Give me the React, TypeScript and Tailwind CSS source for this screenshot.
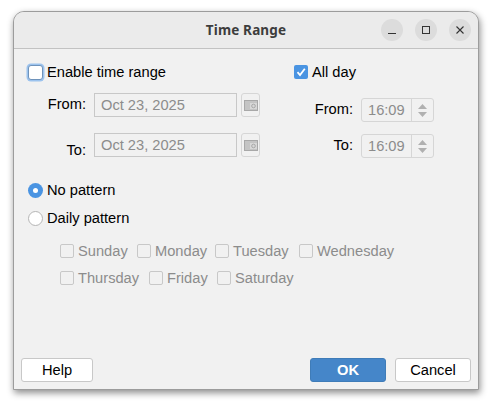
import React from 'react'

const Calendar = () => (
  <div className="ml-1 w-[19px] h-6 rounded-[3px] border border-[#d6d6d6] bg-[#f1f1f1] flex items-center justify-center">
    <svg width="14" height="11" viewBox="0 0 14 11">
      <rect x="0.5" y="0.5" width="13" height="10" fill="#c4c4c4" stroke="#a8a8a8" />
      <rect x="6" y="3" width="7" height="6" fill="#d8d8d8" />
      <circle cx="9.5" cy="6" r="1.8" fill="none" stroke="#a8a8a8" />
    </svg>
  </div>
)

const DateRow = () => (
  <div className="flex">
    <div className="w-[143px] h-6 border border-[#c8c8c8] bg-[#f1f1f1] pl-1.5 flex items-center text-[#8c8c8c]">Oct 23, 2025</div>
    <Calendar />
  </div>
)

const Spinner = () => (
  <div className="flex w-[73px] h-6 rounded-[3px] border border-[#d6d6d6] bg-[#f1f1f1]">
    <div className="w-[50px] pl-1.5 flex items-center text-[#8c8c8c] border-r border-[#d6d6d6]">16:09</div>
    <div className="flex-1 flex flex-col items-center justify-center gap-[3px]">
      <svg width="9" height="5" viewBox="0 0 9 5"><path d="M4.5 0L9 5H0Z" fill="#b0b0b0" /></svg>
      <svg width="9" height="5" viewBox="0 0 9 5"><path d="M4.5 5L9 0H0Z" fill="#b0b0b0" /></svg>
    </div>
  </div>
)

const Day = ({ label, className }: { label: string; className?: string }) => (
  <div className={`flex items-center gap-1 text-[#8c8c8c] ${className ?? ''}`}>
    <div className="w-[14px] h-[14px] shrink-0 rounded-[2px] border border-[#c8c8c8] bg-[#f1f1f1]" />
    <span>{label}</span>
  </div>
)

const WinButton = ({ children }: { children: React.ReactNode }) => (
  <div className="w-[22px] h-[22px] rounded-full bg-[#dcdcdc] flex items-center justify-center">{children}</div>
)

const App = () => {
  return (
    <div className="w-[492px] h-[406px] bg-white pl-[13px] pt-[11px] font-['Liberation_Sans',sans-serif] text-[14.67px] text-black overflow-hidden">
      <div className="w-[466px] h-[379px] flex flex-col rounded-t-[11px] border border-[#9c9c9c] bg-[#f1f1f1] shadow-[1px_3px_7px_rgba(0,0,0,0.45)] overflow-hidden">
        {/* Title bar */}
        <div className="h-[37px] shrink-0 relative flex items-center justify-end gap-3 pr-[7px] bg-[#ebebeb] border-b border-[#c2c2c2]">
          <div className="absolute inset-0 flex items-center justify-center font-['Noto_Sans',sans-serif] font-bold text-[13.5px] tracking-[0.15px] text-[#3d3d3d]">Time Range</div>
          <WinButton>
            <svg width="10" height="10" viewBox="0 0 10 10"><path d="M1 8.5H9" stroke="#333" strokeWidth="1" /></svg>
          </WinButton>
          <WinButton>
            <svg width="10" height="10" viewBox="0 0 10 10"><rect x="1.5" y="1.5" width="7" height="7" fill="none" stroke="#333" /></svg>
          </WinButton>
          <WinButton>
            <svg width="10" height="10" viewBox="0 0 10 10"><path d="M1.5 1.5L8.5 8.5M8.5 1.5L1.5 8.5" stroke="#333" strokeWidth="1.1" /></svg>
          </WinButton>
        </div>

        <div className="flex-1 flex flex-col">
          <div className="flex pt-[15px] pl-[14px]">
            {/* Left column */}
            <div className="w-[266px]">
              <div className="flex items-center h-[16px] gap-1">
                <div className="w-[15px] h-[15px] rounded-[3px] bg-white border border-[#6f93bb] shadow-[0_0_0_1.5px_#9cc3ee]" />
                <span>Enable time range</span>
              </div>
              <div className="mt-[13px] flex">
                <div className="w-[66px] pr-2 pb-[2px] h-6 flex items-center justify-end">From:</div>
                <DateRow />
              </div>
              <div className="mt-4 flex">
                <div className="w-[66px] pr-2 pt-[10px] h-6 flex items-center justify-end">To:</div>
                <DateRow />
              </div>
            </div>

            {/* Right column */}
            <div>
              <div className="flex items-center h-[16px] gap-1">
                <div className="w-[14px] h-[14px] rounded-[2px] bg-[#4a94e2] flex items-center justify-center">
                  <svg width="12" height="12" viewBox="0 0 12 12"><path d="M2.5 6.2L5 9L9.8 2.8" fill="none" stroke="#fff" strokeWidth="1.8" /></svg>
                </div>
                <span>All day</span>
              </div>
              <div className="mt-[18px] flex items-center">
                <div className="w-[67px] pr-2 pb-[2px] flex justify-end">From:</div>
                <Spinner />
              </div>
              <div className="mt-3 flex items-center">
                <div className="w-[67px] pr-2 pb-[2px] flex justify-end">To:</div>
                <Spinner />
              </div>
            </div>
          </div>

          {/* Pattern */}
          <div className="pl-[14px] pt-6 flex flex-col gap-[12px]">
            <div className="flex items-center gap-[4px] h-4">
              <div className="w-[15px] h-[15px] rounded-full bg-[#4a94e2] flex items-center justify-center">
                <div className="w-[5px] h-[5px] rounded-full bg-white" />
              </div>
              <span>No pattern</span>
            </div>
            <div className="flex items-center gap-[4px] h-4">
              <div className="w-[15px] h-[15px] rounded-full bg-white border border-[#b5b5b5]" />
              <span>Daily pattern</span>
            </div>
          </div>

          <div className="pl-[46px] pt-[17px] flex flex-col gap-[11px]">
            <div className="flex h-4">
              <Day label="Sunday" className="w-[77px]" />
              <Day label="Monday" className="w-[78px]" />
              <Day label="Tuesday" className="w-[84px]" />
              <Day label="Wednesday" />
            </div>
            <div className="flex h-4">
              <Day label="Thursday" className="w-[89px]" />
              <Day label="Friday" className="w-[68px]" />
              <Day label="Saturday" />
            </div>
          </div>

          {/* Footer */}
          <div className="mt-auto flex pl-[7px] pr-[7px] pb-[7px]">
            <div className="w-[72px] h-6 pb-[1px] rounded-[3px] border border-[#c8c8c8] bg-white flex items-center justify-center">Help</div>
            <div className="ml-auto w-[76px] h-6 pb-[1px] rounded-[3px] border border-[#3f7cb8] bg-[#4586c9] flex items-center justify-center font-bold text-white">OK</div>
            <div className="ml-[9px] w-[76px] h-6 pb-[1px] rounded-[3px] border border-[#c8c8c8] bg-white flex items-center justify-center">Cancel</div>
          </div>
        </div>
      </div>
    </div>
  )
}

export default App
